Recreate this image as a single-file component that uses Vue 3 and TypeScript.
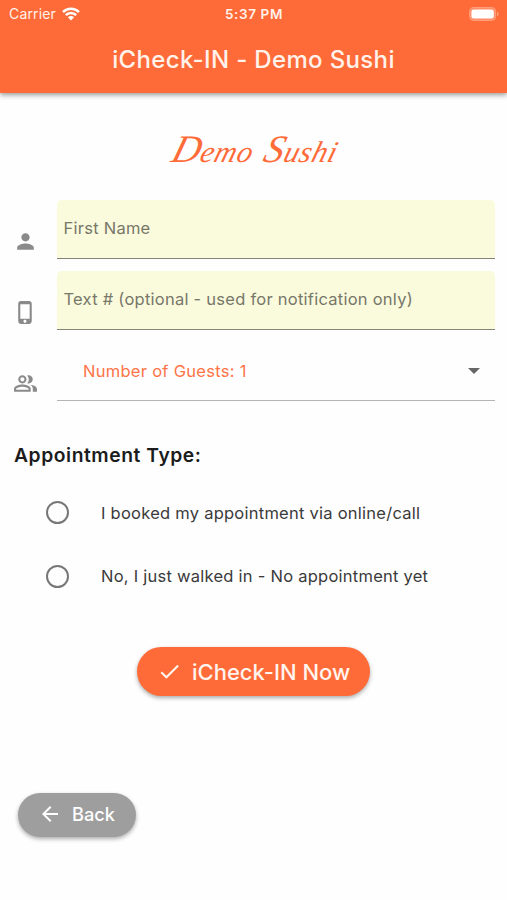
<script setup lang="ts">
import { ref } from 'vue'

interface Field {
  id: string
  label: string
  icon: string
}

const business = 'Demo Sushi'
const fields: Field[] = [
  {
    id: 'name',
    label: 'First Name',
    icon: 'M12 12c2.21 0 4-1.79 4-4s-1.79-4-4-4-4 1.79-4 4 1.79 4 4 4zm0 2c-2.67 0-8 1.34-8 4v2h16v-2c0-2.66-5.33-4-8-4z',
  },
  {
    id: 'phone',
    label: 'Text # (optional - used for notification only)',
    icon: 'M15.5 1h-8C6.12 1 5 2.12 5 3.5v17C5 21.88 6.12 23 7.5 23h8c1.38 0 2.5-1.12 2.5-2.5v-17C18 2.12 16.88 1 15.5 1zm-4 21c-.83 0-1.5-.67-1.5-1.5s.67-1.5 1.5-1.5 1.5.67 1.5 1.5-.67 1.5-1.5 1.5zm4.5-4H7V4h9v14z',
  },
]
const options = [
  { id: 'booked', label: 'I booked my appointment via online/call' },
  { id: 'walkin', label: 'No, I just walked in - No appointment yet' },
]
const guests = ref(1)
const selected = ref('')
</script>

<template>
  <div class="screen">
    <header class="app-bar">
      <div class="status">
        <div class="carrier">
          <span>Carrier</span>
          <svg class="wifi" viewBox="0 0 18 14">
            <path d="M1 5.1a11.4 11.4 0 0 1 16 0M3.8 8.1a7.3 7.3 0 0 1 10.4 0" />
            <path class="dot" d="M9 13.4 5.9 10.3a4.4 4.4 0 0 1 6.2 0z" />
          </svg>
        </div>
        <span class="time">5:37 PM</span>
        <div class="power">
          <svg class="battery" viewBox="0 0 30 14">
            <rect class="shell" x=".6" y=".6" width="26" height="12.8" rx="4" />
            <rect class="charge" x="2.4" y="2.4" width="22.4" height="9.2" rx="2.4" />
            <path class="cap" d="M28 4.8c2.2.7 2.2 3.7 0 4.4z" />
          </svg>
        </div>
      </div>
      <h1>iCheck-IN - {{ business }}</h1>
    </header>

    <main>
      <div class="brand">
        <span v-for="word in business.split(' ')" :key="word" class="word">{{ word }}</span>
      </div>

      <form class="form" @submit.prevent>
        <div v-for="f in fields" :key="f.id" class="row">
          <svg class="icon" viewBox="0 0 24 24"><path :d="f.icon" /></svg>
          <label class="field"><span class="hint">{{ f.label }}</span></label>
        </div>
        <div class="row">
          <svg class="icon" viewBox="0 0 24 24">
            <path d="M16.67 13.13C18.04 14.06 19 15.32 19 17v3h4v-3c0-2.18-3.57-3.47-6.33-3.87zM15 12c2.21 0 4-1.79 4-4s-1.79-4-4-4c-.47 0-.91.1-1.33.24a5.98 5.98 0 0 1 0 7.52c.42.14.86.24 1.33.24zM9 12c2.21 0 4-1.79 4-4s-1.79-4-4-4-4 1.79-4 4 1.79 4 4 4zm0-6c1.1 0 2 .9 2 2s-.9 2-2 2-2-.9-2-2 .9-2 2-2zM9 13c-2.67 0-8 1.34-8 4v3h16v-3c0-2.66-5.33-4-8-4zm6 5H3v-.99C3.2 16.29 6.3 15 9 15s5.8 1.29 6 2v1z" />
          </svg>
          <div class="select">
            <span class="guests">Number of Guests: {{ guests }}</span>
            <svg class="caret" viewBox="0 0 12 6"><path d="M0 0h12L6 6z" /></svg>
          </div>
        </div>
      </form>

      <h2>Appointment Type:</h2>
      <div class="options">
        <div v-for="o in options" :key="o.id" class="option" @click="selected = o.id">
          <span :class="['radio', { on: selected === o.id }]"></span>
          <span class="text">{{ o.label }}</span>
        </div>
      </div>

      <button class="pill primary">
        <svg class="glyph" viewBox="0 0 24 24"><path d="M9 16.17 4.83 12l-1.42 1.41L9 19 21 7l-1.41-1.41z" /></svg>
        <span>iCheck-IN Now</span>
      </button>
      <button class="pill back">
        <svg class="glyph" viewBox="0 0 24 24"><path d="M20 11H7.83l5.59-5.59L12 4l-8 8 8 8 1.41-1.41L7.83 13H20v-2z" /></svg>
        <span>Back</span>
      </button>
    </main>
  </div>
</template>

<style>
body {
  background: #fefefe;
}
</style>

<style scoped>
.screen {
  height: 900px;
  overflow: hidden;
  background: #fefefe;
  font-family: Inter, "Liberation Sans", sans-serif;
  white-space: nowrap;
}
.app-bar {
  height: 93px;
  background: #ff6b38;
  color: #fff2ea;
  box-shadow: 0 2px 5px rgba(0, 0, 0, 0.4);
}
.status {
  height: 27px;
  padding: 0 8px 0 9px;
  display: grid;
  grid-template-columns: 1fr auto 1fr;
  align-items: center;
  font-size: 14px;
}
.carrier {
  display: flex;
  align-items: center;
  gap: 6px;
  letter-spacing: 0.15px;
}
.wifi {
  width: 18px;
  height: 14px;
  fill: none;
  stroke: #fff;
  stroke-width: 2.5;
}
.wifi .dot {
  fill: #fff;
  stroke: none;
}
.time {
  font-size: 13.5px;
  font-weight: 600;
  letter-spacing: 0.6px;
}
.power {
  display: flex;
  justify-content: flex-end;
}
.battery {
  width: 30px;
  height: 14px;
}
.shell {
  fill: #ff8d66;
  stroke: #ffa282;
}
.charge {
  fill: #fff;
}
.cap {
  fill: #ffa282;
}
h1 {
  margin: 0;
  height: 66px;
  line-height: 66px;
  text-align: center;
  font-size: 24px;
  font-weight: 500;
  letter-spacing: 0.35px;
}
main {
  display: flex;
  flex-direction: column;
}
.brand {
  display: flex;
  justify-content: center;
  align-items: baseline;
  gap: 12px;
  height: 107px;
  line-height: 112px;
  padding-left: 4px;
  color: #ff6b38;
  font-family: "Liberation Serif", cursive;
  font-size: 30px;
  font-style: italic;
}
.word {
  display: inline-block;
  letter-spacing: 0.7px;
  transform: skewX(-16deg);
}
.word::first-letter {
  font-size: 39px;
}
.form {
  display: flex;
  flex-direction: column;
  gap: 12px;
  padding: 0 12px;
}
.row {
  display: flex;
  height: 59px;
}
.icon {
  flex: none;
  width: 25px;
  height: 25px;
  margin: 29px 19px 0 1px;
  fill: #8a8a8a;
}
.field,
.select {
  flex: 1;
  box-sizing: border-box;
  display: flex;
  align-items: center;
}
.field {
  padding: 0 7px 2px 6.5px;
  background: #fafbdc;
  border-radius: 5px 5px 0 0;
  border-bottom: 1.5px solid #85857a;
}
.hint {
  color: #77776a;
  font-size: 16.5px;
  letter-spacing: 0.25px;
}
.select {
  justify-content: space-between;
  padding: 0 15px 0 26px;
  border-bottom: 1.5px solid #b4b4b4;
}
.guests {
  color: #ff7447;
  font-size: 16.5px;
  letter-spacing: 0.28px;
}
.caret {
  width: 12px;
  height: 6px;
  fill: #666;
}
h2 {
  margin: 41px 0 0 14px;
  height: 26px;
  line-height: 26px;
  color: #1c1c1c;
  font-size: 19.3px;
  font-weight: 600;
  letter-spacing: 0.55px;
}
.options {
  margin-top: 13px;
}
.option {
  display: flex;
  align-items: center;
  height: 63.5px;
  padding-left: 46px;
}
.radio {
  box-sizing: border-box;
  width: 23px;
  height: 23px;
  margin-right: 32px;
  border: 2.3px solid #777;
  border-radius: 50%;
}
.radio.on {
  background: radial-gradient(circle, #ff6b38 45%, transparent 50%);
  border-color: #ff6b38;
}
.text {
  color: #3a3a3a;
  font-size: 16.5px;
  letter-spacing: 0.25px;
}
.pill {
  display: flex;
  align-items: center;
  box-sizing: border-box;
  padding: 0;
  border: 0;
  border-radius: 25px;
  color: #fff4ee;
  font-family: inherit;
  font-weight: 500;
  box-shadow: 0 2px 4px rgba(0, 0, 0, 0.33);
}
.glyph {
  flex: none;
  fill: currentColor;
}
.primary {
  align-self: center;
  width: 233px;
  height: 49px;
  margin-top: 39px;
  padding-left: 20px;
  gap: 10px;
  background: #ff6b38;
  font-size: 22px;
  letter-spacing: 0;
}
.primary .glyph {
  width: 25px;
  height: 25px;
}
.back {
  width: 118px;
  height: 44px;
  margin: 97px 0 0 18px;
  padding: 0 0 2px 20px;
  gap: 10px;
  background: #9e9e9e;
  color: #fff;
  font-size: 18.2px;
}
.back .glyph {
  width: 24px;
  height: 24px;
}
</style>
